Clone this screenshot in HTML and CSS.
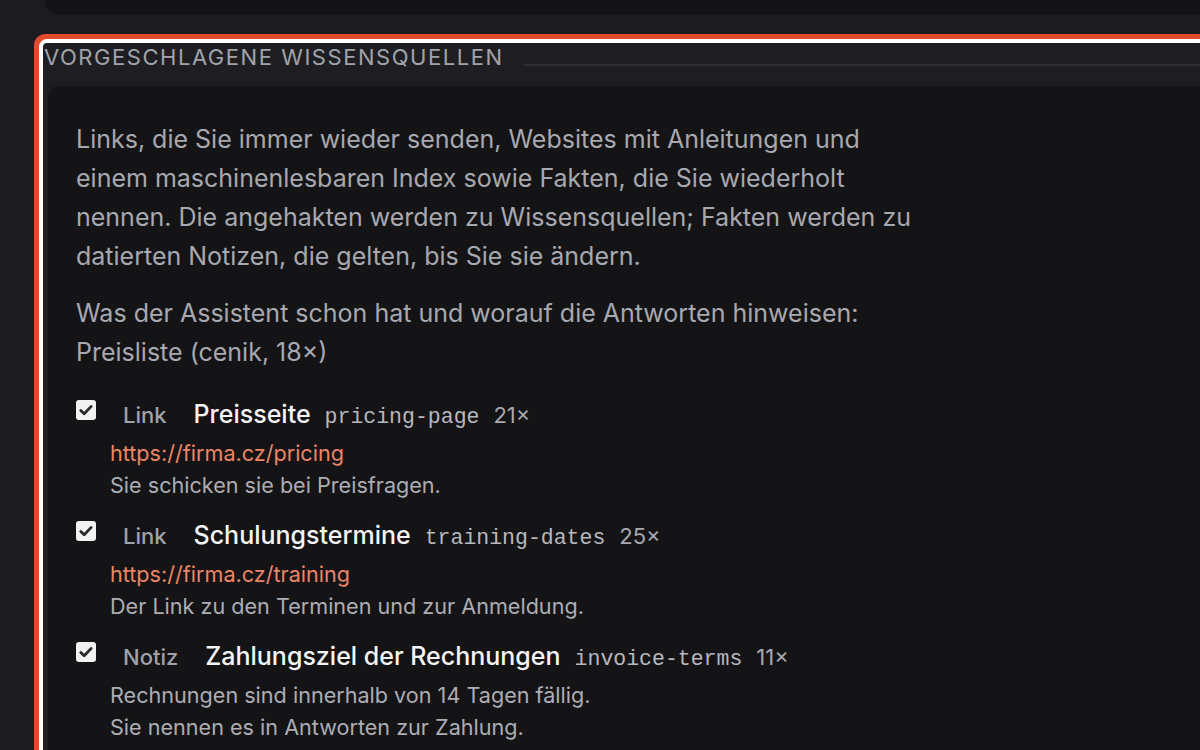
FILE: index.html
```html
<!DOCTYPE html>
<html lang="de">
<head>
<meta charset="utf-8">
<link rel="stylesheet" href="styles.css">
</head>
<body>
<div class="page">
  <div class="topcard"></div>
  <section class="sources">
    <div class="legend">
      <span class="legend-text">Vorgeschlagene Wissensquellen</span>
      <span class="legend-line"></span>
    </div>
    <div class="card">
      <p class="intro">Links, die Sie immer wieder senden, Websites mit Anleitungen und einem maschinenlesbaren Index sowie Fakten, die Sie wiederholt nennen. Die angehakten werden zu Wissensquellen; Fakten werden zu datierten Notizen, die gelten, bis Sie sie ändern.</p>
      <p class="intro second">Was der Assistent schon hat und worauf die Antworten hinweisen: Preisliste (cenik, 18×)</p>

      <div class="item">
        <span class="check"><svg viewBox="0 0 20 20" width="20" height="20"><path d="M4.8 10.4l3.4 3.4L15.2 6.4" fill="none" stroke="#2a2a2e" stroke-width="2.8" stroke-linecap="round" stroke-linejoin="round"/></svg></span>
        <div class="body">
          <div class="head">
            <span class="kind">Link</span>
            <span class="title">Preisseite</span>
            <span class="slug">pricing-page</span>
            <span class="count">21×</span>
          </div>
          <div class="url">https://firma.cz/pricing</div>
          <div class="desc">Sie schicken sie bei Preisfragen.</div>
        </div>
      </div>

      <div class="item">
        <span class="check"><svg viewBox="0 0 20 20" width="20" height="20"><path d="M4.8 10.4l3.4 3.4L15.2 6.4" fill="none" stroke="#2a2a2e" stroke-width="2.8" stroke-linecap="round" stroke-linejoin="round"/></svg></span>
        <div class="body">
          <div class="head">
            <span class="kind">Link</span>
            <span class="title">Schulungstermine</span>
            <span class="slug">training-dates</span>
            <span class="count">25×</span>
          </div>
          <div class="url">https://firma.cz/training</div>
          <div class="desc">Der Link zu den Terminen und zur Anmeldung.</div>
        </div>
      </div>

      <div class="item">
        <span class="check"><svg viewBox="0 0 20 20" width="20" height="20"><path d="M4.8 10.4l3.4 3.4L15.2 6.4" fill="none" stroke="#2a2a2e" stroke-width="2.8" stroke-linecap="round" stroke-linejoin="round"/></svg></span>
        <div class="body">
          <div class="head">
            <span class="kind">Notiz</span>
            <span class="title">Zahlungsziel der Rechnungen</span>
            <span class="slug">invoice-terms</span>
            <span class="count">11×</span>
          </div>
          <div class="desc">Rechnungen sind innerhalb von 14 Tagen fällig.</div>
          <div class="desc">Sie nennen es in Antworten zur Zahlung.</div>
        </div>
      </div>
    </div>
  </section>
</div>
</body>
</html>
```

FILE: styles.css
```css
html, body {
  margin: 0;
  padding: 0;
  background: #1c1c20;
  overflow: hidden;
}
body {
  font-family: Inter, "Noto Sans", sans-serif;
  color: #adadb5;
}
.page {
  width: 1200px;
  height: 750px;
  overflow: hidden;
}
.topcard {
  margin-left: 45px;
  margin-right: -20px;
  height: 15px;
  background: #141417;
  border-bottom-left-radius: 16px;
}
.sources {
  margin-top: 28px;
  margin-left: 43px;
  margin-right: -200px;
  border-radius: 4px;
  outline: 4px solid #ffffff;
  box-shadow: 0 0 0 9px #e24b2b, inset 0 6px 14px rgba(200, 60, 40, 0.12);
  height: 900px;
}
.legend {
  display: flex;
  align-items: flex-start;
  height: 43px;
  background: #1e1e22;
}
.legend-text {
  font-size: 22px;
  line-height: 28px;
  letter-spacing: 0.07em;
  text-transform: uppercase;
  color: #a3a3aa;
  margin-left: 1px;
}
.legend-line {
  flex: 1;
  height: 2px;
  background: #2e2e34;
  margin-top: 21px;
  margin-left: 20px;
}
.card {
  margin-left: 5px;
  background: #141416;
  border-top-left-radius: 12px;
  padding: 34px 28px 0 28px;
  height: 800px;
}
.intro {
  margin: 0;
  max-width: 850px;
  font-size: 25px;
  line-height: 39px;
  color: #a8a8b0;
}
.intro.second {
  margin-top: 18px;
  margin-bottom: 24px;
}
.item {
  display: grid;
  grid-template-columns: 20px 1fr;
  column-gap: 14px;
  margin-bottom: 16px;
}
.check {
  width: 20px;
  height: 20px;
  margin-top: 4px;
  background: #f2f2f2;
  border-radius: 3px;
  display: block;
}
.check svg {
  display: block;
}
.head {
  display: flex;
  align-items: baseline;
  gap: 14px;
  height: 36px;
  line-height: 36px;
}
.kind {
  padding: 0 13px;
  font-size: 22px;
  font-weight: 500;
  color: #a1a1aa;
}
.title {
  font-size: 25px;
  font-weight: 500;
  color: #f4f4f5;
}
.slug {
  font-family: "Liberation Mono", "DejaVu Sans Mono", monospace;
  font-size: 21.5px;
  color: #b8b8be;
}
.count {
  font-size: 22px;
  color: #a8a8b0;
}
.url {
  margin-top: 5px;
  font-size: 21.6px;
  line-height: 32px;
  color: #ec8466;
}
.head + .desc {
  margin-top: 5px;
}
.desc {
  font-size: 21.6px;
  line-height: 32px;
  color: #adadb5;
}
```
